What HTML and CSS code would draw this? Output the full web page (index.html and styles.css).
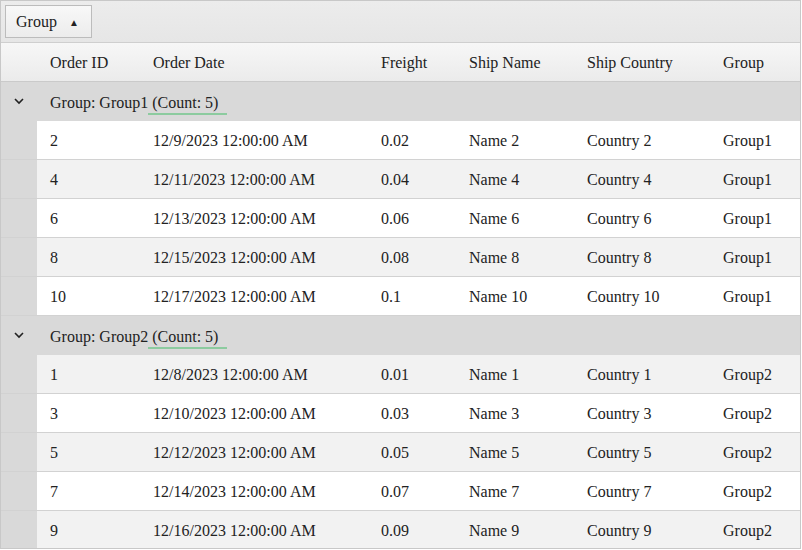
FILE: index.html
```html
<!DOCTYPE html>
<html>
<head>
<meta charset="utf-8">
<link rel="stylesheet" href="styles.css">
</head>
<body>
<div class="grid">
  <div class="toolbar">
    <div class="group-btn"><span>Group</span><span class="arrow">&#9650;</span></div>
  </div>
  <div class="row header">
    <div class="indent"></div>
    <div class="cell c1">Order ID</div>
    <div class="cell c2">Order Date</div>
    <div class="cell c3">Freight</div>
    <div class="cell c4">Ship Name</div>
    <div class="cell c5">Ship Country</div>
    <div class="cell c6">Group</div>
  </div>

  <div class="row grouprow">
    <div class="indent"><svg width="10" height="7" viewBox="0 0 10 7"><path d="M1 1 L5 5 L9 1" fill="none" stroke="#222" stroke-width="1.6"/></svg></div>
    <div class="gtext">Group: Group1<span class="count"> (Count: 5)</span></div>
  </div>
  <div class="row data"><div class="indent"></div><div class="cell c1">2</div><div class="cell c2">12/9/2023 12:00:00 AM</div><div class="cell c3">0.02</div><div class="cell c4">Name 2</div><div class="cell c5">Country 2</div><div class="cell c6">Group1</div></div>
  <div class="row data alt"><div class="indent"></div><div class="cell c1">4</div><div class="cell c2">12/11/2023 12:00:00 AM</div><div class="cell c3">0.04</div><div class="cell c4">Name 4</div><div class="cell c5">Country 4</div><div class="cell c6">Group1</div></div>
  <div class="row data"><div class="indent"></div><div class="cell c1">6</div><div class="cell c2">12/13/2023 12:00:00 AM</div><div class="cell c3">0.06</div><div class="cell c4">Name 6</div><div class="cell c5">Country 6</div><div class="cell c6">Group1</div></div>
  <div class="row data alt"><div class="indent"></div><div class="cell c1">8</div><div class="cell c2">12/15/2023 12:00:00 AM</div><div class="cell c3">0.08</div><div class="cell c4">Name 8</div><div class="cell c5">Country 8</div><div class="cell c6">Group1</div></div>
  <div class="row data"><div class="indent"></div><div class="cell c1">10</div><div class="cell c2">12/17/2023 12:00:00 AM</div><div class="cell c3">0.1</div><div class="cell c4">Name 10</div><div class="cell c5">Country 10</div><div class="cell c6">Group1</div></div>

  <div class="row grouprow">
    <div class="indent"><svg width="10" height="7" viewBox="0 0 10 7"><path d="M1 1 L5 5 L9 1" fill="none" stroke="#222" stroke-width="1.6"/></svg></div>
    <div class="gtext">Group: Group2<span class="count"> (Count: 5)</span></div>
  </div>
  <div class="row data alt"><div class="indent"></div><div class="cell c1">1</div><div class="cell c2">12/8/2023 12:00:00 AM</div><div class="cell c3">0.01</div><div class="cell c4">Name 1</div><div class="cell c5">Country 1</div><div class="cell c6">Group2</div></div>
  <div class="row data"><div class="indent"></div><div class="cell c1">3</div><div class="cell c2">12/10/2023 12:00:00 AM</div><div class="cell c3">0.03</div><div class="cell c4">Name 3</div><div class="cell c5">Country 3</div><div class="cell c6">Group2</div></div>
  <div class="row data alt"><div class="indent"></div><div class="cell c1">5</div><div class="cell c2">12/12/2023 12:00:00 AM</div><div class="cell c3">0.05</div><div class="cell c4">Name 5</div><div class="cell c5">Country 5</div><div class="cell c6">Group2</div></div>
  <div class="row data"><div class="indent"></div><div class="cell c1">7</div><div class="cell c2">12/14/2023 12:00:00 AM</div><div class="cell c3">0.07</div><div class="cell c4">Name 7</div><div class="cell c5">Country 7</div><div class="cell c6">Group2</div></div>
  <div class="row data alt"><div class="indent"></div><div class="cell c1">9</div><div class="cell c2">12/16/2023 12:00:00 AM</div><div class="cell c3">0.09</div><div class="cell c4">Name 9</div><div class="cell c5">Country 9</div><div class="cell c6">Group2</div></div>
</div>
</body>
</html>
```
FILE: styles.css
```css
html, body {
  margin: 0;
  padding: 0;
  background: #fff;
}
body {
  font-family: "Liberation Serif", "Times New Roman", serif;
  font-size: 16px;
  color: #222;
}
.grid {
  width: 801px;
  height: 549px;
  box-sizing: border-box;
  border: 1px solid #c8c8c8;
  overflow: hidden;
  background: #d9d9d9;
}
.toolbar {
  height: 42px;
  box-sizing: border-box;
  border-bottom: 1px solid #cfcfcf;
  background: linear-gradient(#ececec, #e6e6e6);
  padding: 4px;
  display: flex;
  align-items: flex-start;
}
.group-btn {
  width: 87px;
  height: 33px;
  box-sizing: border-box;
  border: 1px solid #bcbcbc;
  background: linear-gradient(#f8f8f8, #ececec);
  display: flex;
  align-items: center;
  padding-left: 10px;
  color: #222;
}
.group-btn .arrow {
  font-size: 10px;
  margin-left: 12px;
  margin-top: 1px;
}
.row {
  display: flex;
  height: 39px;
  flex: none;
  box-sizing: border-box;
  align-items: center;
}
.header {
  height: 39px;
  background: linear-gradient(#f7f7f7, #ebebeb);
  border-bottom: 1px solid #cacaca;
  padding-top: 2px;
}
.header .indent {
  background: transparent;
}
.indent {
  width: 36px;
  height: 100%;
  flex: none;
  background: #d9d9d9;
  display: flex;
  align-items: center;
  justify-content: center;
}
.cell {
  box-sizing: border-box;
  padding-left: 13px;
  white-space: nowrap;
  flex: none;
}
.c1 { width: 103px; }
.c2 { width: 228px; }
.c3 { width: 88px; }
.c4 { width: 118px; }
.c5 { width: 136px; }
.c6 { width: 90px; }
.grouprow {
  background: #d9d9d9;
}
.gtext {
  padding-left: 13px;
  padding-top: 2px;
  white-space: nowrap;
}
.count {
  border-bottom: 2px solid #8ccb9f;
  padding-bottom: 2px;
  padding-right: 9px;
}
.data {
  background: #fff;
  border-bottom: 1px solid #d2d2d2;
}
.data .cell {
  height: 100%;
  display: flex;
  align-items: center;
  padding-top: 2px;
  background: #fff;
}
.data.alt .cell {
  background: #f2f2f2;
}
.data .c6 {
  flex: 1;
}
```
